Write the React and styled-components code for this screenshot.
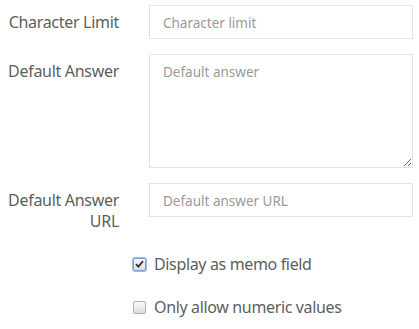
import React from "react";
import styled, { createGlobalStyle } from "styled-components";

const Global = createGlobalStyle`
  html, body { margin: 0; padding: 0; background: #fff; }
  body { font-family: "Noto Sans", "Open Sans", sans-serif; color: #555; }
  * { box-sizing: border-box; }
`;

const Form = styled.form`
  display: flex;
  flex-direction: column;
  gap: 15px;
  padding: 5px 6px 0 0;
  width: 419px;
`;

const Row = styled.div`
  display: grid;
  grid-template-columns: 119px 264px;
  column-gap: 30px;
  align-items: start;
`;

const Label = styled.label`
  text-align: right;
  font-size: 16px;
  letter-spacing: -0.3px;
  line-height: 21px;
  padding-top: 7px;
  color: #5e5e5e;
`;

const fieldBase = `
  width: 100%;
  border: 1px solid #e3e3e3;
  border-radius: 0;
  background: #fff;
  font-family: "Noto Sans", "Open Sans", sans-serif;
  font-size: 13.5px;
  color: #555;
  padding: 7px 13px 5px;
  outline: none;
  &::placeholder { color: #9a9a9a; }
`;

const Input = styled.input`
  ${fieldBase}
  height: 34px;
  display: block;
`;

const TextArea = styled.textarea`
  ${fieldBase}
  height: 114px;
  display: block;
  resize: vertical;
  padding-top: 8px;
`;

const Checks = styled.div`
  display: flex;
  flex-direction: column;
  gap: 23px;
  padding-left: 133px;
  margin-top: 7px;
`;

const CheckRow = styled.label`
  display: flex;
  align-items: center;
  gap: 8px;
  font-size: 16px;
  letter-spacing: -0.35px;
  line-height: 20px;
  color: #5e5e5e;
`;

const Box = styled.span`
  width: 13px;
  height: 13px;
  border: 1px solid ${(p) => (p.$focus ? "#7a9fd6" : "#b0b0b0")};
  border-radius: 2px;
  background: linear-gradient(#fcfcfc, #dcdcdc);
  box-shadow: ${(p) => (p.$focus ? "0 0 0 1px #9cbdf0" : "none")};
  display: flex;
  align-items: center;
  justify-content: center;
  flex-shrink: 0;
`;

export default function App() {
  return (
    <>
      <Global />
      <Form>
        <Row>
          <Label>Character Limit</Label>
          <Input placeholder="Character limit" />
        </Row>
        <Row>
          <Label>Default Answer</Label>
          <TextArea placeholder="Default answer" />
        </Row>
        <Row>
          <Label>Default Answer URL</Label>
          <Input placeholder="Default answer URL" />
        </Row>
        <Checks>
          <CheckRow>
            <Box $focus>
              <svg width="9" height="8" viewBox="0 0 9 8">
                <path d="M1 4.2 L3.4 6.6 L8 1.2" fill="none" stroke="#333" strokeWidth="1.8" />
              </svg>
            </Box>
            Display as memo field
          </CheckRow>
          <CheckRow>
            <Box />
            Only allow numeric values
          </CheckRow>
        </Checks>
      </Form>
    </>
  );
}
